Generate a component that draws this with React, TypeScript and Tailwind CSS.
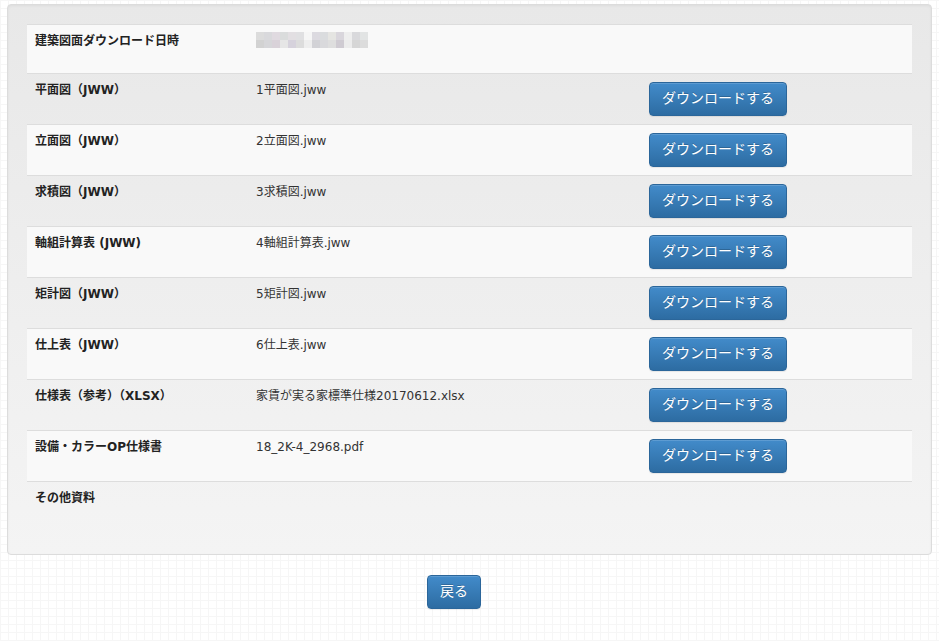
import React from "react";

const rows: { label: string; file: string; button: boolean }[] = [
  { label: "平面図（JWW）", file: "1平面図.jww", button: true },
  { label: "立面図（JWW）", file: "2立面図.jww", button: true },
  { label: "求積図（JWW）", file: "3求積図.jww", button: true },
  { label: "軸組計算表 (JWW)", file: "4軸組計算表.jww", button: true },
  { label: "矩計図（JWW）", file: "5矩計図.jww", button: true },
  { label: "仕上表（JWW）", file: "6仕上表.jww", button: true },
  { label: "仕様表（参考）（XLSX）", file: "家賃が実る家標準仕様20170612.xlsx", button: true },
  { label: "設備・カラーOP仕様書", file: "18_2K-4_2968.pdf", button: true },
];

const blur1 = ["#dcdcdc", "#d9d9dc", "#e0dae0", "#dadcdc", "#e2dfe2", "#e0e0e2", "#f6f6f6", "#dcdae0", "#dadcde", "#e5e5e2", "#d9d6dc", "#eeeeee", "#d9d9dc", "#e2e4e4"];
const blur2 = ["#d2d2d2", "#d6d6d9", "#d9d2d9", "#e6e6e6", "#d6d2dc", "#dcdcdc", "#eeeeee", "#d2d2d6", "#d9d9dc", "#dedede", "#cfcbd2", "#ececec", "#d6d6d6", "#dcdcdc"];

function Btn({ children }: { children: React.ReactNode }) {
  return (
    <button
      className="block px-[12px] pt-[4px] pb-[8px] text-[14px] leading-[20px] text-white rounded-[4px] border border-[#2b669a] bg-[linear-gradient(to_bottom,#428bca_0%,#2d6ca2_100%)] [text-shadow:0_-1px_0_rgba(0,0,0,0.2)] shadow-[inset_0_1px_0_rgba(255,255,255,0.15),0_1px_1px_rgba(0,0,0,0.075)]"
      style={{ fontFamily: '"Noto Sans CJK JP", sans-serif' }}
    >
      {children}
    </button>
  );
}

export default function App() {
  return (
    <div
      className="min-h-[641px] w-full bg-white bg-[linear-gradient(to_right,#f6f6f6_1px,transparent_1px),linear-gradient(to_bottom,#f6f6f6_1px,transparent_1px)] bg-[size:8px_8px] pt-[4px] px-[7px] text-[#333]"
      style={{ fontFamily: '"DejaVu Sans", "Noto Sans CJK JP", sans-serif' }}
    >
      <div className="rounded-[4px] border border-[#dcdcdc] bg-[linear-gradient(to_bottom,#e8e8e8_0%,#f4f4f4_100%)] p-[19px] shadow-[inset_0_1px_3px_rgba(0,0,0,0.05)]">
        <div className="text-[12px] leading-[17px]">
          <div className="grid grid-cols-[221px_393px_1fr] h-[49px] border-t border-[#dddddd] bg-[#f9f9f9]">
            <div className="p-[8px] font-bold text-[#222]">建築図面ダウンロード日時</div>
            <div className="p-[8px] pt-[7px]">
              <div className="flex flex-col">
                <div className="flex">
                  {blur1.map((c, i) => (
                    <div key={i} className="w-[8px] h-[8px]" style={{ backgroundColor: c }} />
                  ))}
                </div>
                <div className="flex">
                  {blur2.map((c, i) => (
                    <div key={i} className="w-[8px] h-[8px]" style={{ backgroundColor: c }} />
                  ))}
                </div>
              </div>
            </div>
            <div />
          </div>
          {rows.map((r, i) => (
            <div
              key={i}
              className={
                "grid grid-cols-[221px_393px_1fr] h-[51px] border-t border-[#dddddd] " +
                (i % 2 === 1 ? "bg-[#f9f9f9]" : "")
              }
            >
              <div className="p-[8px] font-bold text-[#222]">{r.label}</div>
              <div className="p-[8px]">{r.file}</div>
              <div className="flex items-start p-[8px]">{r.button && <Btn>ダウンロードする</Btn>}</div>
            </div>
          ))}
          <div className="grid grid-cols-[221px_393px_1fr] h-[54px] border-t border-[#dddddd]">
            <div className="p-[8px] font-bold text-[#222]">その他資料</div>
            <div />
            <div />
          </div>
        </div>
      </div>
      <div className="flex justify-center pt-[20px]">
        <div className="mr-[31px]">
          <Btn>戻る</Btn>
        </div>
      </div>
    </div>
  );
}
